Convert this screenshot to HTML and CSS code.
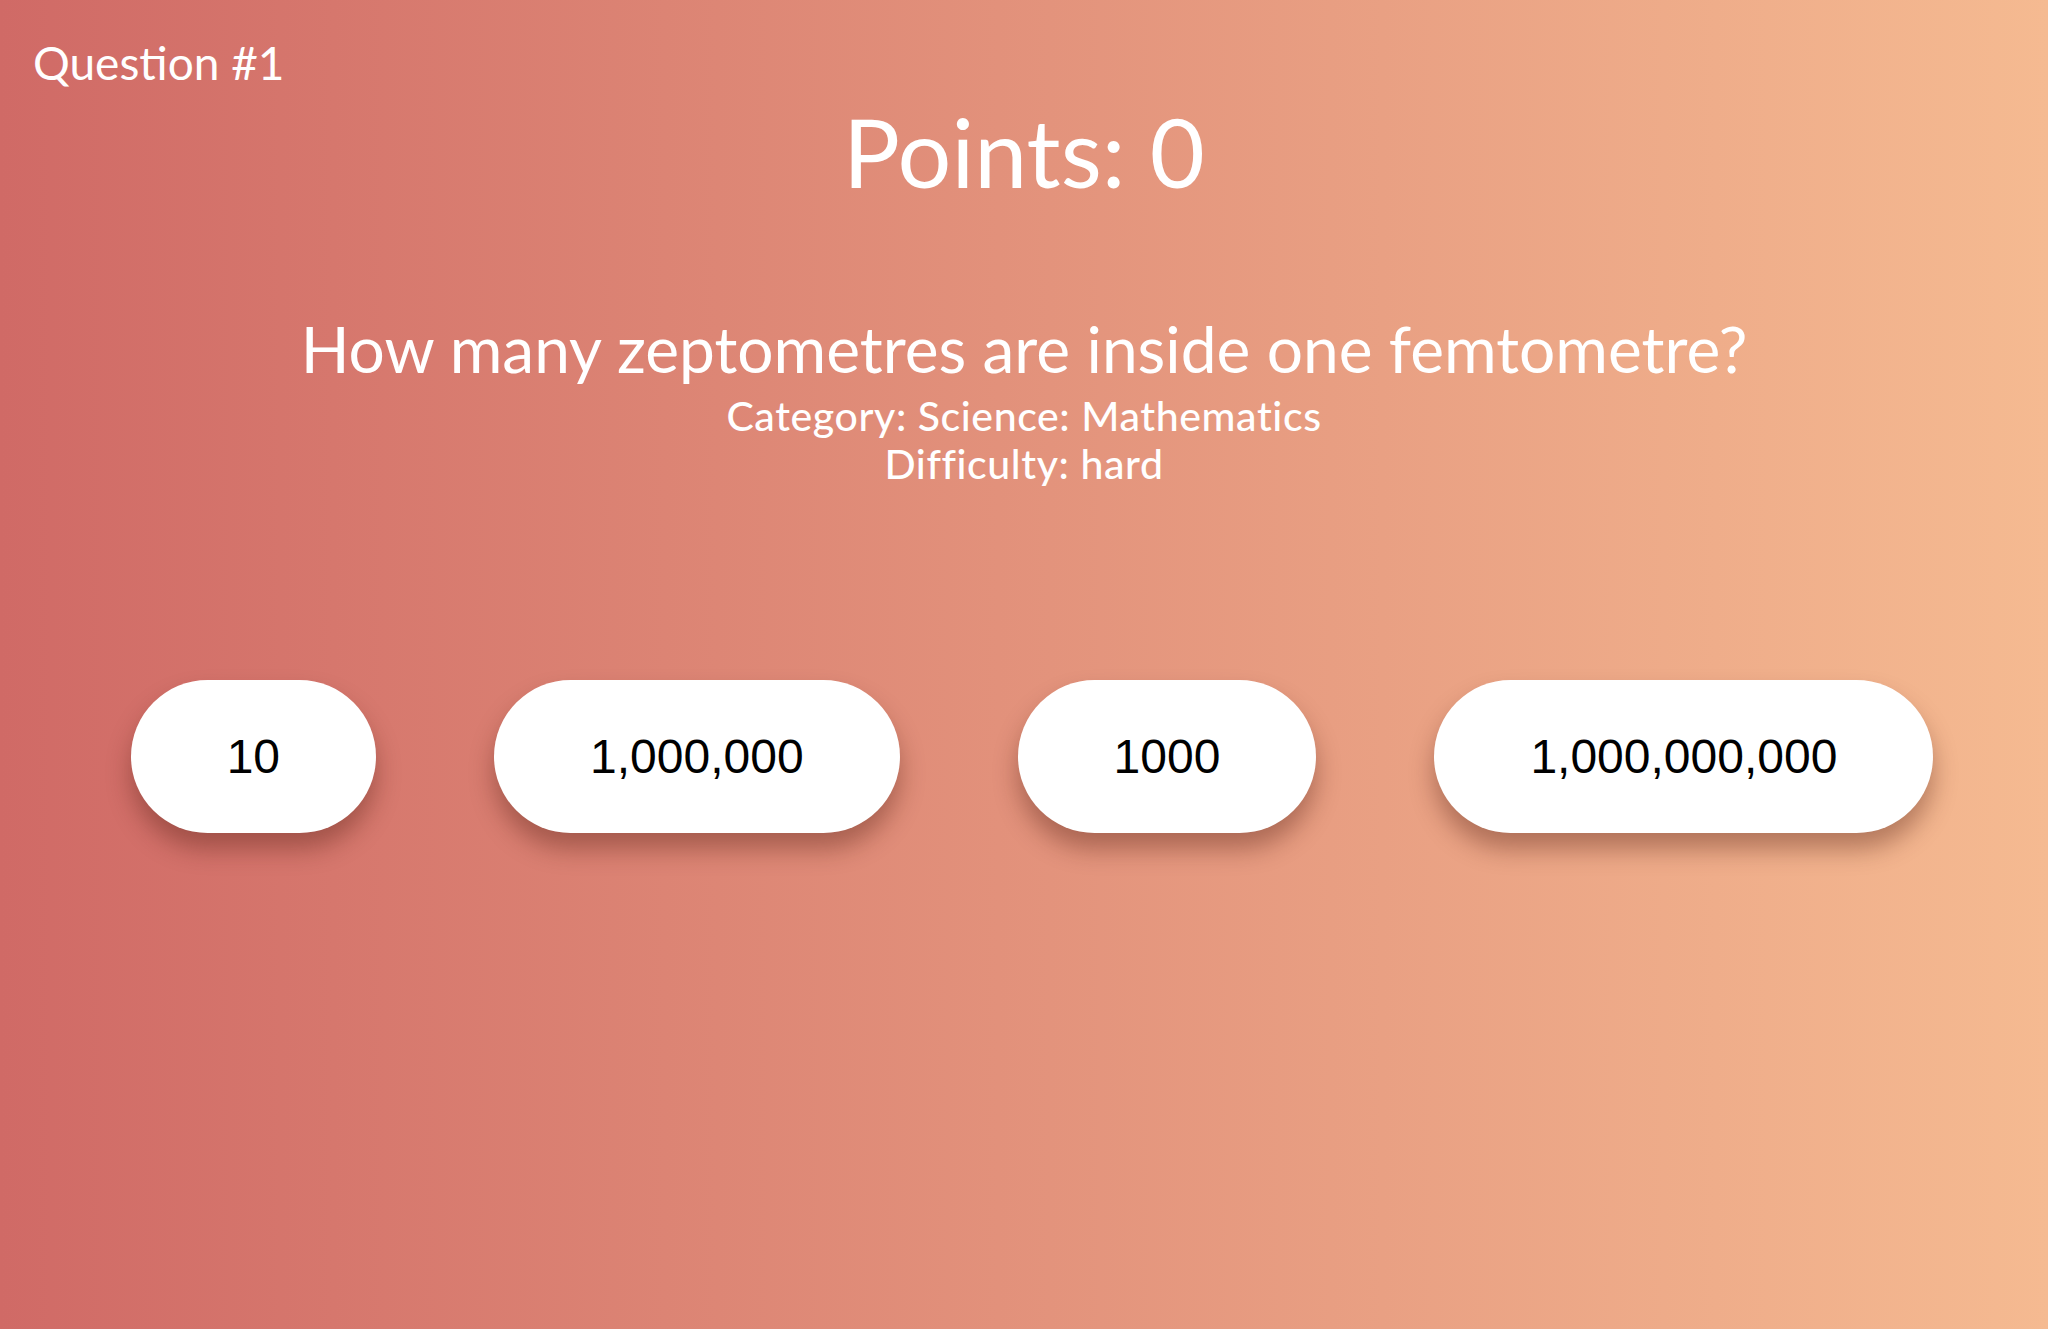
FILE: index.html
```html
<!DOCTYPE html>
<html lang="en">
<head>
<meta charset="utf-8">
<title>Quiz</title>
<link rel="stylesheet" href="styles.css">
</head>
<body>
<main class="quiz">
  <div class="question-number">Question #1</div>
  <h1 class="points">Points: 0</h1>
  <section class="question-block">
    <h2 class="question-text">How many zeptometres are inside one femtometre?</h2>
    <p class="meta">Category: Science: Mathematics</p>
    <p class="meta">Difficulty: hard</p>
  </section>
  <div class="answers">
    <button class="answer">10</button>
    <button class="answer">1,000,000</button>
    <button class="answer">1000</button>
    <button class="answer">1,000,000,000</button>
  </div>
</main>
</body>
</html>
```
FILE: styles.css
```css
html, body {
  margin: 0;
  padding: 0;
  height: 100%;
}
body {
  background: linear-gradient(to right, #d06a66 0%, #f5ba91 100%);
  font-family: "Lato", "Open Sans", sans-serif;
  color: #ffffff;
}
.quiz {
  display: flex;
  flex-direction: column;
  min-height: 100%;
}
.question-number {
  font-size: 46px;
  line-height: 58px;
  padding: 34px 0 0 33px;
  font-weight: 400;
}
.points {
  margin: 4px 0 0 0;
  text-align: center;
  font-size: 95px;
  line-height: 110px;
  font-weight: 400;
}
.question-block {
  margin-top: 100px;
  text-align: center;
}
.question-text {
  margin: 0;
  font-size: 64px;
  line-height: 86px;
  font-weight: 400;
}
.meta {
  margin: 0;
  font-size: 41px;
  line-height: 48px;
  font-weight: 500;
  letter-spacing: 0.6px;
}
.answers {
  display: flex;
  justify-content: center;
  gap: 118px;
  padding-left: 16px;
  margin-top: 192px;
}
.answer {
  font-family: "Liberation Sans", Arial, sans-serif;
  font-size: 48px;
  color: #000;
  background: #fff;
  border: none;
  border-radius: 80px;
  padding: 49px 96px;
  line-height: 55px;
  box-shadow: 0 16px 24px rgba(80, 25, 15, 0.38);
  cursor: pointer;
}
```
